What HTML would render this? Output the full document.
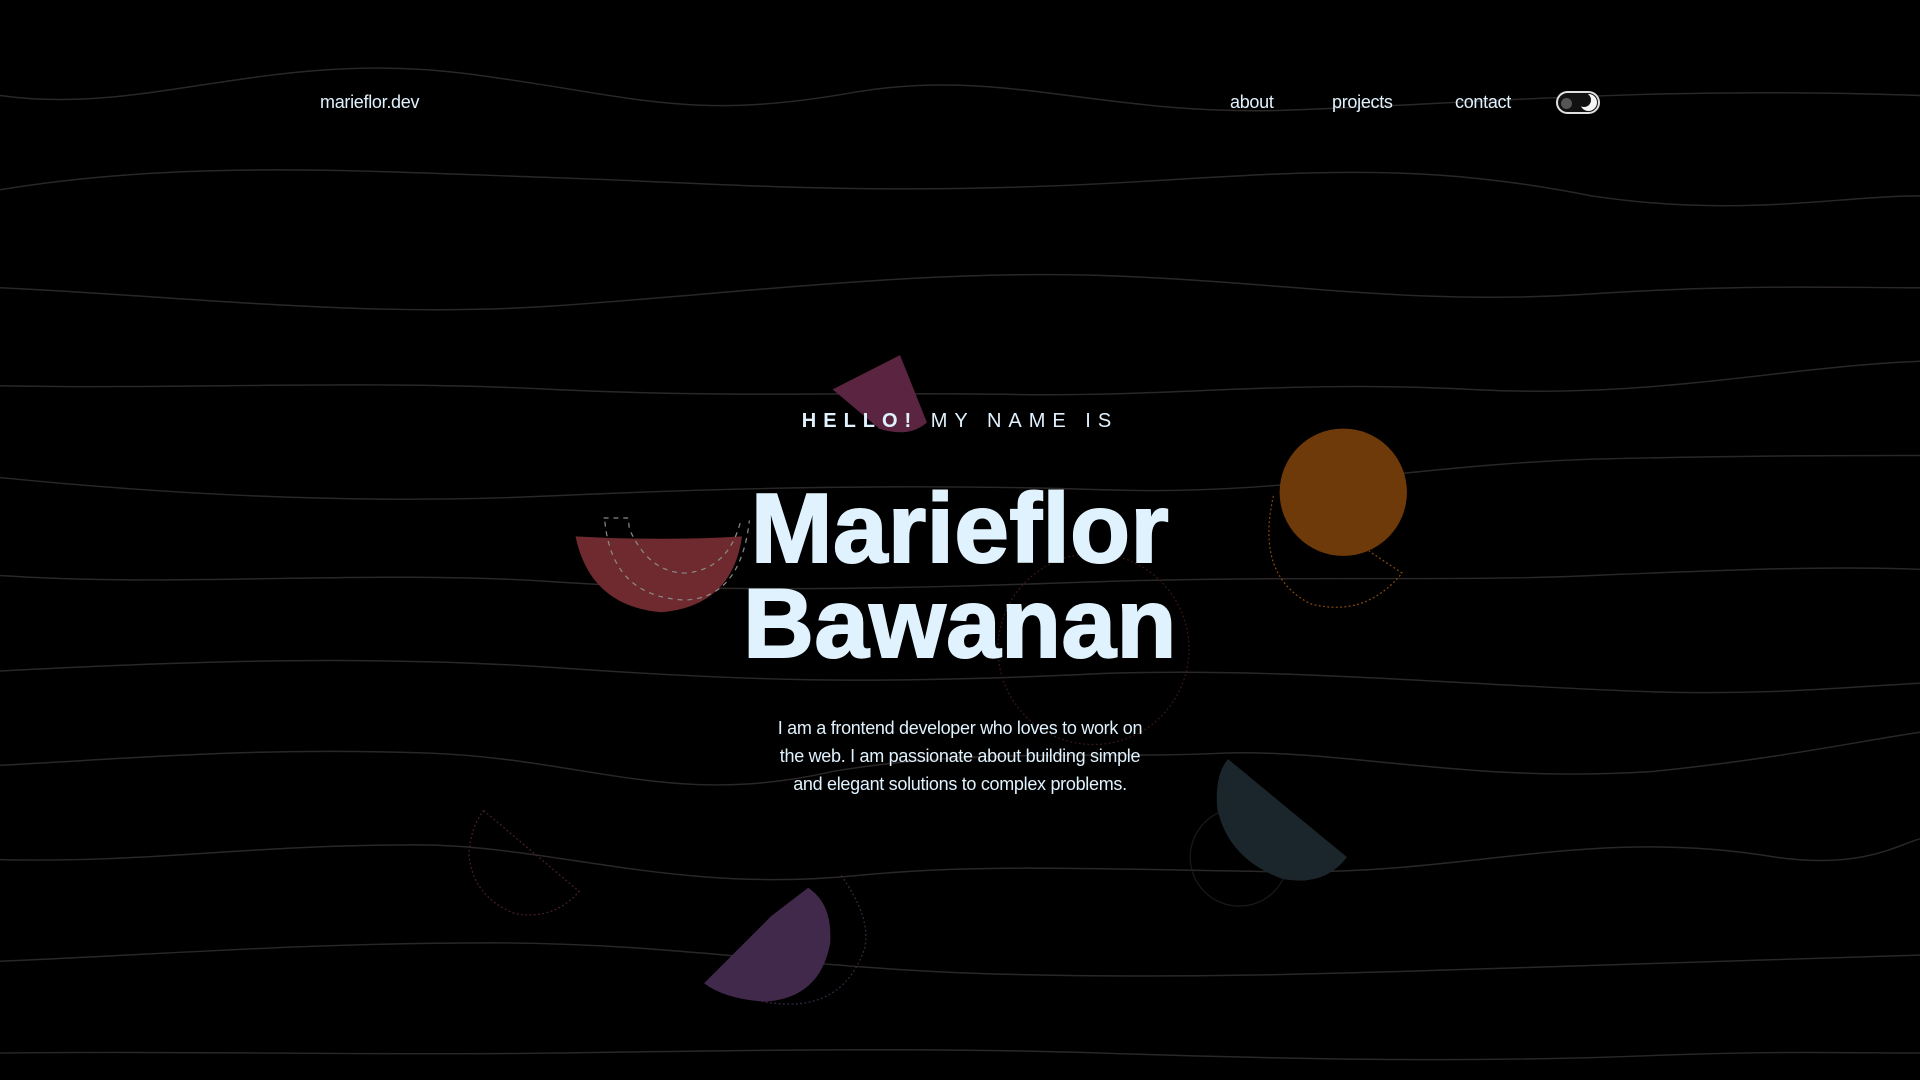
<!DOCTYPE html>
<html><head><meta charset="utf-8"><style>
html,body{margin:0;padding:0;background:#000;width:1920px;height:1080px;overflow:hidden;font-family:"Liberation Sans",sans-serif;color:#e0f2fe}
svg.bg{position:absolute;left:0;top:0;width:1920px;height:1080px}
.logo{position:absolute;left:320px;top:92px;font-size:18px;letter-spacing:-0.3px}
.nav{position:absolute;top:92px;font-size:18px;letter-spacing:-0.3px}
.toggle{position:absolute;left:1556px;top:91px;width:40px;height:19px;border:2px solid #e0e0e0;border-radius:12px;background:#111}
.toggle .a{position:absolute;left:3px;top:5px;width:11px;height:11px;border-radius:50%;background:#555}
.toggle .b{position:absolute;left:22px;top:1px;width:17px;height:17px;border-radius:50%;background:#f5f5f5}
.toggle .c{position:absolute;left:19px;top:0px;width:14px;height:14px;border-radius:50%;background:#111}
.hello{position:absolute;left:0;width:1920px;top:410px;text-align:center;font-size:20px;letter-spacing:7px}
.hello b{font-weight:900}
h1{position:absolute;left:0;width:1920px;top:481px;margin:0;text-align:center;font-size:98px;line-height:95px;font-weight:bold;letter-spacing:0.5px;-webkit-text-stroke:2px #e0f2fe}
p{position:absolute;left:765px;width:390px;top:714px;margin:0;text-align:center;font-size:18px;line-height:28px;letter-spacing:-0.3px}
</style></head><body>
<svg class="bg" viewBox="0 0 1568 882" preserveAspectRatio="none">
<g fill="none" stroke="#2b2727" stroke-width="1.2">
<path d="M0,78 C120,95 220,40 380,60 C520,78 560,100 700,75 C820,55 900,95 1050,90 C1200,85 1350,70 1568,78"/>
<path d="M0,155 C150,130 300,140 450,145 C600,150 700,160 900,150 C1050,142 1150,130 1300,160 C1420,178 1500,160 1568,160"/>
<path d="M0,235 C150,242 300,260 450,250 C600,240 750,220 900,225 C1050,230 1150,250 1300,240 C1420,232 1500,235 1568,235"/>
<path d="M0,315 C150,318 300,310 450,318 C600,325 700,320 820,322 C950,325 1050,310 1200,318 C1350,326 1450,300 1568,295"/>
<path d="M0,390 C150,405 300,412 450,405 C600,398 750,395 900,400 C1050,405 1150,380 1300,375 C1420,372 1500,372 1568,372"/>
<path d="M0,470 C150,480 300,465 450,475 C600,485 750,480 900,475 C1050,470 1200,475 1300,470 C1420,465 1500,462 1568,465"/>
<path d="M0,548 C150,540 300,535 450,545 C600,555 700,560 900,550 C1050,545 1200,560 1350,565 C1450,568 1520,560 1568,558"/>
<path d="M0,625 C100,620 200,610 350,615 C480,620 550,660 680,630 C800,610 900,620 1000,615 C1100,612 1200,640 1350,630 C1450,620 1520,605 1568,598"/>
<path d="M0,702 C120,705 200,690 340,690 C450,690 550,730 700,715 C800,705 900,710 1050,712 C1200,714 1300,675 1450,700 C1520,710 1550,690 1568,685"/>
<path d="M0,785 C120,780 250,770 400,770 C550,770 650,790 800,795 C950,800 1100,795 1250,790 C1400,785 1500,782 1568,780"/>
<path d="M0,860 C150,858 300,862 450,860 C600,858 750,855 900,860 C1050,865 1200,868 1350,862 C1450,858 1520,860 1568,860"/>
</g>
<circle cx="893" cy="530" r="78" fill="none" stroke="#3a1818" stroke-dasharray="1.5 2"/>
<circle cx="1012" cy="700" r="40" fill="none" stroke="#1a1a1a"/>
<path d="M680,318 L735,290 L757,345 Q742,358 718,350 Z" fill="#5b2542"/>
<path d="M470,438 Q540,442 606,438 Q598,495 540,500 Q482,495 470,438 Z" fill="#6e2a2e"/>
<g fill="none" stroke="#8a8a8a" stroke-dasharray="4 4" stroke-width="1">
<path d="M493,423 L513,423 L514,432 Q530,468 560,468 Q595,465 605,425"/>
<path d="M494,426 Q500,488 560,490 Q605,488 612,425"/>
</g>
<circle cx="1097" cy="402" r="52" fill="#6f3a0a"/>
<path d="M1040,405 Q1025,470 1070,493 Q1115,505 1145,468 L1118,450" fill="none" stroke="#8a4a10" stroke-dasharray="1.5 2"/>
<path d="M1003,620 L1100,700 Q1082,724 1048,718 Q1003,702 994,660 Q992,632 1003,620 Z" fill="#1b262c"/>
<path d="M395,662 L473,728 Q452,752 420,746 Q386,732 383,698 Q384,676 395,662 Z" fill="none" stroke="#4a2030" stroke-dasharray="1.5 2"/>
<path d="M687,715 Q712,750 706,775 Q690,820 645,820 Q620,820 600,810" fill="none" stroke="#3a2a45" stroke-dasharray="1.5 2"/>
<path d="M660,725 Q680,738 678,770 Q670,815 625,818 Q592,816 575,803 L630,748 Z" fill="#40294a"/>
</svg>
<div class="logo">marieflor.dev</div>
<div class="nav" style="left:1230px">about</div>
<div class="nav" style="left:1332px">projects</div>
<div class="nav" style="left:1455px">contact</div>
<div class="toggle"><div class="a"></div><div class="b"></div><div class="c"></div></div>
<div class="hello"><b>HELLO!</b> MY NAME IS</div>
<h1>Marieflor<br>Bawanan</h1>
<p>I am a frontend developer who loves to work on<br>the web. I am passionate about building simple<br>and elegant solutions to complex problems.</p>
</body></html>
